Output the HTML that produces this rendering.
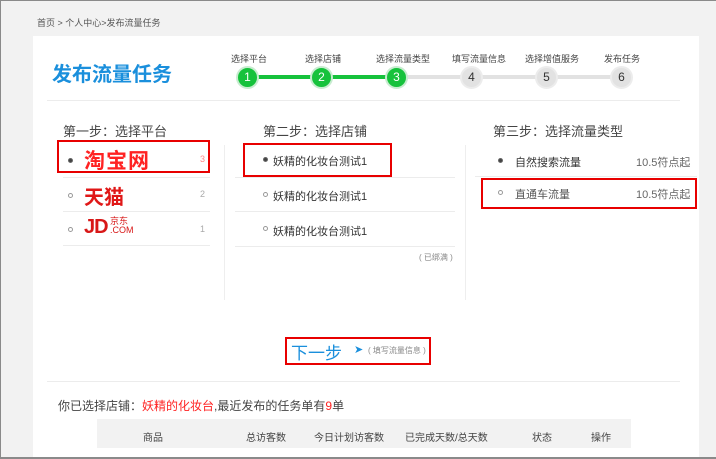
<!DOCTYPE html>
<html><head><meta charset="utf-8"><style>
*{margin:0;padding:0;box-sizing:border-box}
body{width:716px;height:459px;overflow:hidden;background:#f2f2f2;font-family:"Liberation Sans","Noto Sans CJK SC",sans-serif;position:relative;color:#333}
.a{position:absolute;white-space:nowrap}
.frame{position:absolute;left:0;top:0;width:716px;height:459px;border:1px solid #8a8a8a;border-bottom:2px solid #8a8a8a;border-right:none}
.panel{position:absolute;left:33px;top:36px;width:666px;height:423px;background:#fff}
.c{position:absolute;width:23px;height:23px;border-radius:50%;top:66px;text-align:center;line-height:19px;font-size:12px;border:2px solid #d8d8d8}
.g{background:#16c23c;color:#fff;border-color:#c8ecd0}
.n{background:#e2e2e2;color:#333;border-color:#ececec}
.lab{top:52px;font-size:9px;color:#444}
.red{position:absolute;border:2px solid #e80000}
.sep{position:absolute;height:1px;background:#ececec}
.rad{position:absolute;width:5px;height:5px;border-radius:50%;border:1px solid #999}
.rad.on{background:#444;border-color:#666}
.h{font-size:13px;color:#444}
.t{font-size:11px;color:#333}
</style></head><body>
<div class="panel"></div>
<div class="a" style="left:37px;top:16px;font-size:9px;color:#555">首页 &gt; 个人中心&gt;发布流量任务</div>
<div class="a" style="left:52px;top:58px;font-size:20px;font-weight:bold;color:#1a8fdc">发布流量任务</div>
<div class="a" style="left:248px;top:75px;width:150px;height:4px;background:#16c23c"></div>
<div class="a" style="left:398px;top:75px;width:224px;height:4px;background:#e2e2e2"></div>
<div class="a lab" style="left:231px">选择平台</div>
<div class="a lab" style="left:305px">选择店铺</div>
<div class="a lab" style="left:376px">选择流量类型</div>
<div class="a lab" style="left:452px">填写流量信息</div>
<div class="a lab" style="left:525px">选择增值服务</div>
<div class="a lab" style="left:604px">发布任务</div>
<div class="c g" style="left:236px">1</div>
<div class="c g" style="left:310px">2</div>
<div class="c g" style="left:385px">3</div>
<div class="c n" style="left:460px">4</div>
<div class="c n" style="left:535px">5</div>
<div class="c n" style="left:610px">6</div>
<div class="sep" style="left:47px;top:100px;width:633px"></div>

<div class="a h" style="left:63px;top:121px">第一步：选择平台</div>
<div class="a h" style="left:263px;top:121px">第二步：选择店铺</div>
<div class="a h" style="left:493px;top:121px">第三步：选择流量类型</div>
<div class="a" style="left:224px;top:145px;width:1px;height:155px;background:#eee"></div>
<div class="a" style="left:465px;top:145px;width:1px;height:155px;background:#eee"></div>

<div class="red" style="left:57px;top:140px;width:153px;height:33px"></div>
<div class="rad on" style="left:68px;top:158px"></div>
<div class="a" style="left:84px;top:145px;font-size:21px;font-weight:bold;color:#f22;letter-spacing:1px">淘宝网</div>
<div class="a" style="left:200px;top:154px;font-size:9px;color:#f88">3</div>
<div class="sep" style="left:63px;top:177px;width:147px"></div>
<div class="rad" style="left:68px;top:193px"></div>
<div class="a" style="left:84px;top:181px;font-size:20px;font-weight:bold;color:#e01818">天猫</div>
<div class="a" style="left:200px;top:189px;font-size:9px;color:#aaa">2</div>
<div class="sep" style="left:63px;top:211px;width:147px"></div>
<div class="rad" style="left:68px;top:227px"></div>
<div class="a" style="left:84px;top:216px;font-size:20px;font-weight:bold;color:#d81818;letter-spacing:-1px">JD</div>
<div class="a" style="left:110px;top:217px;font-size:9px;color:#d81818;line-height:9px">京东<br>.COM</div>
<div class="a" style="left:200px;top:224px;font-size:9px;color:#aaa">1</div>
<div class="sep" style="left:63px;top:245px;width:147px"></div>

<div class="red" style="left:243px;top:143px;width:149px;height:34px"></div>
<div class="rad on" style="left:263px;top:157px"></div>
<div class="a t" style="left:273px;top:153px">妖精的化妆台测试1</div>
<div class="sep" style="left:235px;top:177px;width:220px"></div>
<div class="rad" style="left:263px;top:192px"></div>
<div class="a t" style="left:273px;top:188px">妖精的化妆台测试1</div>
<div class="sep" style="left:235px;top:211px;width:220px"></div>
<div class="rad" style="left:263px;top:226px"></div>
<div class="a t" style="left:273px;top:223px">妖精的化妆台测试1</div>
<div class="sep" style="left:235px;top:246px;width:220px"></div>
<div class="a" style="left:419px;top:252px;font-size:8px;color:#888">( 已绑满 )</div>

<div class="rad on" style="left:498px;top:158px"></div>
<div class="a t" style="left:515px;top:154px">自然搜索流量</div>
<div class="a t" style="left:636px;top:154px;color:#666">10.5符点起</div>
<div class="sep" style="left:475px;top:176px;width:222px"></div>
<div class="red" style="left:481px;top:178px;width:216px;height:31px"></div>
<div class="rad" style="left:498px;top:190px"></div>
<div class="a t" style="left:515px;top:186px;color:#555">直通车流量</div>
<div class="a t" style="left:636px;top:186px;color:#666">10.5符点起</div>

<div class="red" style="left:285px;top:337px;width:146px;height:28px"></div>
<div class="a" style="left:291px;top:339px;font-size:17px;color:#1a8fdc">下一步</div>
<div class="a" style="left:354px;top:343px;font-size:11px;color:#1a8fdc">➤</div>
<div class="a" style="left:368px;top:345px;font-size:8px;color:#888">( 填写流量信息 )</div>
<div class="sep" style="left:47px;top:381px;width:633px"></div>

<div class="a" style="left:58px;top:397px;font-size:12px;color:#444">你已选择店铺：<span style="color:#f22">妖精的化妆台</span>,最近发布的任务单有<span style="color:#f22">9</span>单</div>
<div class="a" style="left:97px;top:419px;width:534px;height:29px;background:#f2f2f2"></div>
<div class="a" style="left:143px;top:429px;font-size:10px;color:#444">商品</div>
<div class="a" style="left:246px;top:429px;font-size:10px;color:#444">总访客数</div>
<div class="a" style="left:314px;top:429px;font-size:10px;color:#444">今日计划访客数</div>
<div class="a" style="left:405px;top:429px;font-size:10px;color:#444">已完成天数/总天数</div>
<div class="a" style="left:532px;top:429px;font-size:10px;color:#444">状态</div>
<div class="a" style="left:591px;top:429px;font-size:10px;color:#444">操作</div>
<div class="frame"></div>
</body></html>
